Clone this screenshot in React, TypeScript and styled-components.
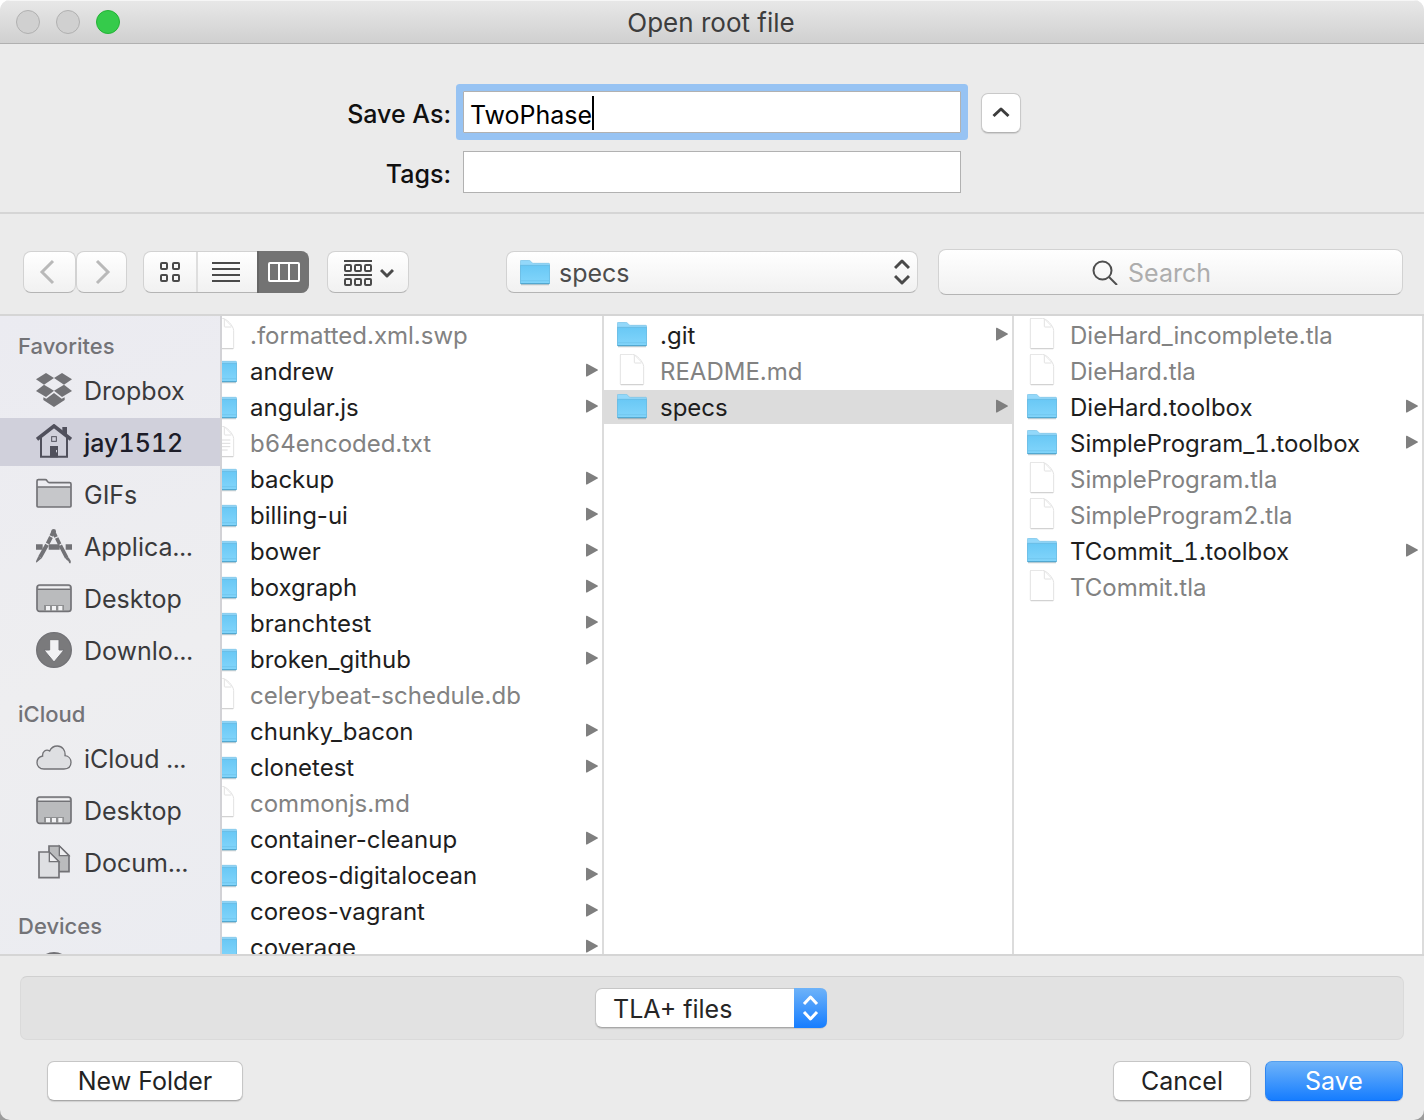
import React from "react";
import styled, { createGlobalStyle, css } from "styled-components";

const GlobalStyle = createGlobalStyle`
  *, *::before, *::after { box-sizing: border-box; }
  html { background: linear-gradient(#ffffff 50%, #9c9c9c 50%); height: 100%; }
  body { margin: 0; }
  body, button, input, select {
    font-family: Inter, Roboto, "Liberation Sans", sans-serif;
    font-size: 25px;
    line-height: 32px;
    color: #262626;
  }
  button, input, select { margin: 0; padding: 0; border: 0; background: none; }
  ul { list-style: none; margin: 0; padding: 0; }
  svg { display: block; flex: none; }
`;

const Window = styled.main`
  display: flex;
  flex-direction: column;
  height: 100vh;
  overflow: hidden;
  background: #ebebeb;
  border-radius: 10px;
`;

/* ---------- title bar ---------- */

const TitleBar = styled.header`
  display: grid;
  grid-template-columns: 1fr auto 1fr;
  align-items: center;
  height: 44px;
  flex: none;
  padding: 1px 18px 0 16px;
  background: linear-gradient(#e8e8e8, #d0d0d0);
  border-bottom: 1px solid #b0b0b0;
  box-shadow: inset 0 1px 0 #f6f6f6;
`;

const Lights = styled.div`
  display: flex;
  gap: 16px;
`;

const Light = styled.button<{ $on?: boolean }>`
  width: 24px;
  height: 24px;
  border-radius: 50%;
  background: ${(p) => (p.$on ? "#35cb4b" : "#d0d0d0")};
  border: 1px solid ${(p) => (p.$on ? "#24b236" : "#b0b0b0")};
`;

const Title = styled.h1`
  margin: 0;
  padding-top: 2px;
  font-size: 26px;
  font-weight: 400;
  line-height: 32px;
  color: #3d3d3d;
`;

/* ---------- name and tags ---------- */

const NameForm = styled.section`
  display: grid;
  grid-template-columns: 1fr minmax(0, 498px) 1fr;
  gap: 18px 12px;
  align-items: center;
  flex: none;
  padding: 47px 0 19px;
  border-bottom: 2px solid #d5d5d5;
`;

const FieldLabel = styled.label`
  grid-column: 1;
  justify-self: end;
  padding-top: 4px;
  font-weight: 500;
  color: #101010;
`;

const fieldBox = css`
  height: 42px;
  border: 1px solid #b1b1b1;
  background: #ffffff;
`;

const NameField = styled.div`
  ${fieldBox}
  display: flex;
  align-items: center;
  padding: 2px 0 0 6px;
  box-shadow: 0 0 0 7px #97c3f3;
  border-radius: 1px;
`;

const NameInput = styled.input`
  field-sizing: content;
  padding-top: 4px;
  color: #000000;
  caret-color: transparent;
  outline: none;
`;

const Caret = styled.span`
  width: 2px;
  height: 34px;
  background: #000000;
`;

const TagsInput = styled.input`
  ${fieldBox}
  width: 100%;
  padding: 0 7px;
  outline: none;
`;

const CollapseButton = styled.button`
  display: grid;
  place-items: center;
  width: 40px;
  height: 40px;
  margin: 2px 0 0 8px;
  background: #ffffff;
  border: 1px solid #c9c9c9;
  border-bottom-color: #b3b3b3;
  border-radius: 7px;
  box-shadow: 0 1px 1px rgba(0, 0, 0, 0.12);
`;

/* ---------- toolbar ---------- */

const Toolbar = styled.nav`
  display: flex;
  align-items: center;
  flex: none;
  padding: 35px 21px 19px 23px;
  border-bottom: 2px solid #d5d5d5;
`;

const raised = css`
  background: linear-gradient(#ffffff, #f1f1f1);
  border: 1px solid #d2d2d2;
  border-bottom-color: #b4b4b4;
`;

const ToolButton = styled.button<{ $width: number; $padding: string }>`
  ${raised}
  display: flex;
  align-items: center;
  justify-content: center;
  gap: 8px;
  width: ${(p) => p.$width}px;
  height: 42px;
  padding: ${(p) => p.$padding};
  border-radius: 8px;
`;

const ToolGroup = styled.div`
  display: flex;
  margin-right: 16px;
`;

const Segments = styled.div`
  ${raised}
  display: flex;
  height: 42px;
  margin-right: 18px;
  border-radius: 8px;
`;

const Segment = styled.button<{ $width: number; $active?: boolean }>`
  display: grid;
  place-items: center;
  width: ${(p) => p.$width}px;
  &:nth-child(2) {
    padding-right: 4px;
    border-left: 2px solid #dedede;
  }
  ${(p) =>
    p.$active &&
    css`
      margin: -1px -1px -1px 0;
      background: #737373;
      border-left: 2px solid #666666;
      border-radius: 0 8px 8px 0;
    `}
`;

const Picker = styled.div<{ $width: number }>`
  display: grid;
  align-items: center;
  width: ${(p) => p.$width}px;
  > * {
    grid-area: 1 / 1;
  }
  > svg {
    pointer-events: none;
  }
`;

const FolderPicker = styled(Picker)`
  margin: 0 20px 0 97px;
  > svg:nth-of-type(1) {
    margin: 2px 0 0 14px;
  }
  > svg:nth-of-type(2) {
    justify-self: end;
    margin-right: 8px;
  }
`;

const FolderSelect = styled.select`
  ${raised}
  appearance: none;
  width: 100%;
  height: 42px;
  padding: 2px 40px 0 52px;
  border-radius: 8px;
  color: #4c4c4c;
`;

const SearchBox = styled.label`
  ${raised}
  display: flex;
  align-items: center;
  justify-content: center;
  gap: 10px;
  flex: 1;
  height: 46px;
  padding-right: 38px;
  border-radius: 8px;
`;

const SearchInput = styled.input`
  field-sizing: content;
  padding-top: 2px;
  outline: none;
  &::placeholder {
    color: #adadad;
    opacity: 1;
  }
`;

/* ---------- browser ---------- */

const Browser = styled.section`
  display: flex;
  flex: 1;
  min-height: 0;
  overflow: hidden;
  border-bottom: 2px solid #d5d5d5;
`;

const Sidebar = styled.aside`
  display: flex;
  flex-direction: column;
  gap: 20px;
  flex: 0 0 222px;
  padding-top: 10px;
  overflow: hidden;
  background: linear-gradient(160deg, #ebebf1, #eeeef0 55%, #ebecf1);
  border-right: 2px solid #d2d2d6;
`;

const PlaceHeading = styled.h2`
  margin: 0;
  padding-left: 18px;
  font-size: 22px;
  font-weight: 500;
  line-height: 40px;
  color: #737377;
`;

const Places = styled.ul`
  display: flex;
  flex-direction: column;
  gap: 4px;
`;

const Place = styled.button<{ $selected?: boolean }>`
  display: flex;
  align-items: center;
  gap: 12px;
  width: 100%;
  height: 48px;
  padding-left: 36px;
  white-space: nowrap;
  font-variant-numeric: tabular-nums;
  background: ${(p) => (p.$selected ? "#d0d0db" : "transparent")};
  color: ${(p) => (p.$selected ? "#1c1c28" : "#3a3a3c")};
  font-weight: ${(p) => (p.$selected ? 500 : 400)};
`;

const PlaceName = styled.span`
  padding-top: 2px;
`;

const Columns = styled.div`
  display: flex;
  flex: 1;
  justify-content: flex-end;
  min-width: 0;
  overflow: hidden;
  background: #ffffff;
`;

const Column = styled.ul`
  display: flex;
  flex-direction: column;
  gap: 2px;
  flex: 0 0 410px;
  padding-top: 2px;
  border-right: 2px solid #dcdcdc;
`;

const Entry = styled.button<{ $selected?: boolean; $dim?: boolean; $numbered?: boolean }>`
  display: flex;
  align-items: center;
  gap: 13px;
  width: 100%;
  height: 34px;
  padding: 0 4px 0 13px;
  font-size: 24px;
  line-height: 32px;
  font-variant-numeric: ${(p) => (p.$numbered ? "tabular-nums" : "normal")};
  background: ${(p) => (p.$selected ? "#dcdcdc" : "transparent")};
  color: ${(p) => (p.$dim ? "#828282" : "#1e1e1e")};
`;

const EntryName = styled.span`
  flex: 1;
  padding-top: 2px;
  text-align: left;
  white-space: nowrap;
`;

/* ---------- footer ---------- */

const Footer = styled.footer`
  flex: none;
  padding: 20px 20px 19px;
`;

const FilterPanel = styled.div`
  display: flex;
  align-items: center;
  justify-content: center;
  height: 64px;
  padding-right: 2px;
  background: #e2e2e2;
  border: 1px solid #dadada;
  border-top-color: #d0d0d0;
  border-radius: 7px;
`;

const FilterPicker = styled(Picker)`
  > svg {
    justify-self: end;
  }
`;

const FilterSelect = styled.select`
  appearance: none;
  width: 100%;
  height: 40px;
  padding: 2px 40px 0 17px;
  background: #ffffff;
  border: 1px solid #c6c6c6;
  border-bottom-color: #a8a8a8;
  border-radius: 7px;
  box-shadow: 0 1px 1px rgba(0, 0, 0, 0.12);
`;

const Actions = styled.div`
  display: flex;
  gap: 14px;
  padding: 21px 1px 0 27px;
`;

const PushButton = styled.button<{ $width: number; $primary?: boolean; $first?: boolean }>`
  width: ${(p) => p.$width}px;
  height: 40px;
  margin-right: ${(p) => (p.$first ? "auto" : "0")};
  border-radius: 7px;
  border: 1px solid ${(p) => (p.$primary ? "#2f86f0" : "#c6c6c6")};
  border-top-color: ${(p) => (p.$primary ? "#559fee" : "#c6c6c6")};
  border-bottom-color: ${(p) => (p.$primary ? "#1268f5" : "#a8a8a8")};
  background: ${(p) => (p.$primary ? "linear-gradient(#6eb3f9, #167dff)" : "#ffffff")};
  color: ${(p) => (p.$primary ? "#ffffff" : "#222222")};
  box-shadow: 0 1px 1px rgba(0, 0, 0, 0.12);
`;

/* ---------- drawings ---------- */

const FolderIcon = () => (
  <svg width="30" height="26" viewBox="0 0 90 78" aria-hidden="true">
    <defs>
      <linearGradient id="folder-face" x1="0" y1="0" x2="0" y2="1">
        <stop offset="0" stopColor="#69c8f5" />
        <stop offset="1" stopColor="#82d5fb" />
      </linearGradient>
    </defs>
    <path d="M3 74H87" stroke="#000" strokeOpacity=".16" strokeWidth="4" />
    <path d="M1 70V4Q1 1 4 1H26Q29 1 31 3L36 8Q38 10 41 10H86Q89 10 89 13V70Z" fill="#93d8fa" stroke="#74bfe4" strokeWidth="2" />
    <path d="M1 16H89V69Q89 71 87 71H3Q1 71 1 69Z" fill="url(#folder-face)" stroke="#63b5dd" strokeWidth="2" />
    <path d="M2 62H88" stroke="#6cc2ea" strokeWidth="2" />
    <path d="M2 71H88" stroke="#4ea3cb" strokeWidth="3" />
  </svg>
);

const DocIcon = ({ lined }: { lined?: boolean }) => (
  <svg width="30" height="34" viewBox="0 2 90 102" aria-hidden="true">
    <path d="M11 3H46C58 3 80 26 80 40V91Q80 94 77 94H13Q10 94 10 91V5Q10 3 12 3Z" fill="#fff" stroke="#e2e2e2" strokeWidth="3" />
    <path d="M11 94H79" stroke="#cfcfcf" strokeWidth="3" />
    <path d="M52 5V27Q52 29 54 29H73" fill="none" stroke="#e2e2e2" strokeWidth="3" />
    <path d="M54 7L74 28" stroke="#e6e6e6" strokeWidth="2" />
    {lined && <path d="M20 24H44M20 34H44M20 44H70M20 54H70M20 64H70M20 74H62" stroke="#dcdcdc" strokeWidth="3" />}
  </svg>
);

const Arrow = () => (
  <svg width="12" height="16" viewBox="0 0 12 16" aria-hidden="true">
    <path d="M0 1.300Q0 .3 1 .8L11.600 6.600Q12.200 7 11.600 7.400L1 13.400Q0 13.900 0 12.900Z" fill="#7f7f7f" />
  </svg>
);

const glyph = "#727276";

const PlaceSvg = ({ children }: { children: React.ReactNode }) => (
  <svg width="36" height="36" viewBox="0 0 108 108" fill="none" stroke={glyph} strokeWidth="5" aria-hidden="true">
    {children}
  </svg>
);

const DropboxIcon = () => (
  <PlaceSvg>
    <g fill={glyph} stroke="none">
      <path d="M30 3L54 18L24 38L0 22Z" />
      <path d="M78 3L54 18L84 38L108 22Z" />
      <path d="M24 38L54 56L30 75L0 57Z" />
      <path d="M84 38L54 56L78 75L108 57Z" />
      <path d="M54 63L31 80L22 76V84L54 105L86 84V76L77 80Z" />
    </g>
  </PlaceSvg>
);

const HomeIcon = () => (
  <svg width="36" height="36" viewBox="0 0 108 108" fill="none" stroke="#50505c" aria-hidden="true">
    <path d="M79 9H93V34L79 24Z" fill="#50505c" stroke="none" />
    <path d="M3 46L54 6L105 46" strokeWidth="11" />
    <path d="M15 40V98H93V40" strokeWidth="6" />
    <rect x="47" y="38" width="14" height="14" strokeWidth="3" />
    <rect x="42" y="66" width="24" height="34" fill="#50505c" stroke="none" />
    <rect x="60" y="78" width="3" height="7" fill="#d0d0db" stroke="none" />
  </svg>
);

const FolderOutlineIcon = () => (
  <PlaceSvg>
    <path d="M3 33H105V93H3Z" fill="#c6c7ca" stroke="none" />
    <path d="M3 90V15Q3 11 7 11H28Q31 11 33 14L36 18Q38 20 41 20H101Q105 20 105 24V90Q105 93 102 93H6Q3 93 3 90Z" />
    <path d="M4 33H104" strokeWidth="4" />
  </PlaceSvg>
);

const ApplicationsIcon = () => (
  <PlaceSvg>
    <path d="M0 57H20M38 57H71M89 57H108" strokeWidth="17" />
    <path d="M53 9L46 24M45 27L35 47M33 50L12 88" strokeWidth="12" />
    <circle cx="53" cy="10" r="7" fill={glyph} stroke="none" />
    <path d="M7 85L17 91L1 104L0 100Z" fill={glyph} stroke="none" />
    <path d="M54 14L60 27M62 30L71 49M73 52L92 89" strokeWidth="11" />
    <path d="M88 90Q95 84 99 90Q106 98 104 106H100Q98 97 92 96Z" fill={glyph} stroke="none" />
  </PlaceSvg>
);

const DesktopIcon = () => (
  <PlaceSvg>
    <rect x="3" y="15" width="102" height="79" rx="8" fill="#babbbd" />
    <path d="M8 19H100V25H8Z" fill="#f2f2f4" stroke="none" />
    <path d="M4 28H104" strokeWidth="4" />
    <path d="M24 75H84V92H24Z" fill="#8f9092" stroke="none" />
    <path d="M30 78H42V91H30ZM48 78H60V91H48ZM67 78H79V91H67Z" fill="#f2f2f4" stroke="none" />
  </PlaceSvg>
);

const DownloadsIcon = () => (
  <PlaceSvg>
    <circle cx="54" cy="54" r="52" fill="#7a7a7c" strokeWidth="4" />
    <path d="M41 23H69V54H84L54 90L24 54H41Z" fill="#f2f2f4" strokeWidth="3" />
  </PlaceSvg>
);

const CloudIcon = () => (
  <PlaceSvg>
    <path
      d="M24 87C10 87 3 77 3 68C3 58 10 50 20 48C18 35 30 26 41 33C46 22 55 18 64 18C79 18 89 31 87 47C98 48 105 57 105 67C105 79 97 87 84 87Z"
      fill="#dedfe2"
      strokeWidth="4"
    />
  </PlaceSvg>
);

const DocumentsIcon = () => (
  <PlaceSvg>
    <path d="M39 6H70L99 35V83H39Z" fill="#babbbd" />
    <path d="M70 6V35H99Z" fill="#eeeef0" strokeWidth="4" />
    <path d="M9 24H39L69 54V101H9Z" fill="#dedfe2" />
    <path d="M40 24V53H69Z" fill="#eeeef0" strokeWidth="4" />
  </PlaceSvg>
);

const DiscIcon = () => (
  <PlaceSvg>
    <circle cx="54" cy="51" r="47" fill="#babbbd" strokeWidth="8" />
    <circle cx="54" cy="51" r="14" fill="#f2f2f4" />
  </PlaceSvg>
);

/* ---------- data ---------- */

type Kind = "folder" | "doc" | "lined";
type Item = [name: string, kind: Kind];

const sections = [
  {
    heading: "Favorites",
    places: [
      { name: "Dropbox", Icon: DropboxIcon },
      { name: "jay1512", Icon: HomeIcon },
      { name: "GIFs", Icon: FolderOutlineIcon },
      { name: "Applica...", Icon: ApplicationsIcon },
      { name: "Desktop", Icon: DesktopIcon },
      { name: "Downlo...", Icon: DownloadsIcon },
    ],
  },
  {
    heading: "iCloud",
    places: [
      { name: "iCloud ...", Icon: CloudIcon },
      { name: "Desktop", Icon: DesktopIcon },
      { name: "Docum...", Icon: DocumentsIcon },
    ],
  },
  { heading: "Devices", places: [{ name: "", Icon: DiscIcon }] },
];

const columns: { selected?: string; items: Item[] }[] = [
  {
    items: [
      [".formatted.xml.swp", "doc"],
      ["andrew", "folder"],
      ["angular.js", "folder"],
      ["b64encoded.txt", "lined"],
      ["backup", "folder"],
      ["billing-ui", "folder"],
      ["bower", "folder"],
      ["boxgraph", "folder"],
      ["branchtest", "folder"],
      ["broken_github", "folder"],
      ["celerybeat-schedule.db", "doc"],
      ["chunky_bacon", "folder"],
      ["clonetest", "folder"],
      ["commonjs.md", "doc"],
      ["container-cleanup", "folder"],
      ["coreos-digitalocean", "folder"],
      ["coreos-vagrant", "folder"],
      ["coverage", "folder"],
    ],
  },
  {
    selected: "specs",
    items: [
      [".git", "folder"],
      ["README.md", "doc"],
      ["specs", "folder"],
    ],
  },
  {
    items: [
      ["DieHard_incomplete.tla", "doc"],
      ["DieHard.tla", "doc"],
      ["DieHard.toolbox", "folder"],
      ["SimpleProgram_1.toolbox", "folder"],
      ["SimpleProgram.tla", "doc"],
      ["SimpleProgram2.tla", "doc"],
      ["TCommit_1.toolbox", "folder"],
      ["TCommit.tla", "doc"],
    ],
  },
];

export default function App() {
  return (
    <>
      <GlobalStyle />
      <Window>
        <TitleBar>
          <Lights>
            <Light aria-label="Close" />
            <Light aria-label="Minimize" />
            <Light $on aria-label="Zoom" />
          </Lights>
          <Title>Open root file</Title>
        </TitleBar>

        <NameForm>
          <FieldLabel htmlFor="name">Save As:</FieldLabel>
          <NameField>
            <NameInput id="name" defaultValue="TwoPhase" />
            <Caret />
          </NameField>
          <CollapseButton aria-label="Collapse">
            <svg width="18" height="12" viewBox="0 0 18 12" fill="none" stroke="#3c3c3c" strokeWidth="3">
              <path d="M1.500 9L9 2L16.500 9" strokeLinejoin="round" />
            </svg>
          </CollapseButton>
          <FieldLabel htmlFor="tags">Tags:</FieldLabel>
          <TagsInput id="tags" />
        </NameForm>

        <Toolbar>
          <ToolGroup>
            <ToolButton $width={53} $padding="0 5px 0 0" aria-label="Back">
              <svg width="16" height="26" viewBox="0 0 16 26" fill="none" stroke="#b9b9b9" strokeWidth="3">
                <path d="M14 2L3 13L14 24" />
              </svg>
            </ToolButton>
            <ToolButton $width={51} $padding="0 0 0 3px" aria-label="Forward">
              <svg width="16" height="26" viewBox="0 0 16 26" fill="none" stroke="#b9b9b9" strokeWidth="3">
                <path d="M2 2L13 13L2 24" />
              </svg>
            </ToolButton>
          </ToolGroup>
          <Segments>
            <Segment $width={52} aria-label="Icons">
              <svg width="20" height="20" viewBox="0 0 20 20" fill="none" stroke="#4a4a4a" strokeWidth="2">
                <rect x="1" y="1" width="6" height="6" rx="1" />
                <rect x="13" y="1" width="6" height="6" rx="1" />
                <rect x="1" y="13" width="6" height="6" rx="1" />
                <rect x="13" y="13" width="6" height="6" rx="1" />
              </svg>
            </Segment>
            <Segment $width={61} aria-label="List">
              <svg width="28" height="20" viewBox="0 0 28 20" stroke="#4a4a4a" strokeWidth="2">
                <path d="M0 1H28M0 7H28M0 13H28M0 19H28" />
              </svg>
            </Segment>
            <Segment $width={52} $active aria-label="Columns">
              <svg width="32" height="20" viewBox="0 0 32 20" fill="none" stroke="#ffffff" strokeWidth="2">
                <rect x="1" y="1" width="30" height="18" rx="1" />
                <path d="M11 1V19M21 1V19" />
              </svg>
            </Segment>
          </Segments>
          <ToolButton $width={82} $padding="2px 0 0 2px" aria-label="Arrange">
            <svg width="28" height="26" viewBox="0 0 28 26" fill="none" stroke="#4a4a4a" strokeWidth="2">
              <path d="M0 1H28M0 15H28" />
              <rect x="1" y="5" width="6" height="6" rx="1" />
              <rect x="11" y="5" width="6" height="6" rx="1" />
              <rect x="21" y="5" width="6" height="6" rx="1" />
              <rect x="1" y="19" width="6" height="6" rx="1" />
              <rect x="11" y="19" width="6" height="6" rx="1" />
              <rect x="21" y="19" width="6" height="6" rx="1" />
            </svg>
            <svg width="14" height="10" viewBox="0 0 14 10" fill="none" stroke="#4a4a4a" strokeWidth="3">
              <path d="M1 2L7 8L13 2" strokeLinejoin="round" />
            </svg>
          </ToolButton>
          <FolderPicker $width={412}>
            <FolderSelect aria-label="Folder">
              <option>specs</option>
            </FolderSelect>
            <FolderIcon />
            <svg width="16" height="26" viewBox="0 0 16 26" fill="none" stroke="#4a4a4a" strokeWidth="3">
              <path d="M1 9L8 2L15 9M1 17L8 24L15 17" strokeLinejoin="round" />
            </svg>
          </FolderPicker>
          <SearchBox>
            <svg width="26" height="26" viewBox="0 0 26 26" fill="none" stroke="#4f4f4f" strokeWidth="2">
              <circle cx="10.500" cy="11.500" r="9" />
              <path d="M17 18L25 26" />
            </svg>
            <SearchInput placeholder="Search" aria-label="Search" />
          </SearchBox>
        </Toolbar>

        <Browser>
          <Sidebar>
            {sections.map(({ heading, places }) => (
              <div key={heading}>
                <PlaceHeading>{heading}</PlaceHeading>
                <Places>
                  {places.map(({ name, Icon }) => (
                    <li key={name}>
                      <Place $selected={name === "jay1512"}>
                        <Icon />
                        <PlaceName>{name}</PlaceName>
                      </Place>
                    </li>
                  ))}
                </Places>
              </div>
            ))}
          </Sidebar>
          <Columns>
            {columns.map(({ selected, items }, i) => (
              <Column key={i}>
                {items.map(([name, kind]) => (
                  <li key={name}>
                    <Entry $selected={name === selected} $dim={kind !== "folder"} $numbered={/\d/.test(name)}>
                      {kind === "folder" ? <FolderIcon /> : <DocIcon lined={kind === "lined"} />}
                      <EntryName>{name}</EntryName>
                      {kind === "folder" && <Arrow />}
                    </Entry>
                  </li>
                ))}
              </Column>
            ))}
          </Columns>
        </Browser>

        <Footer>
          <FilterPanel>
            <FilterPicker $width={232}>
              <FilterSelect aria-label="File type">
                <option>TLA+ files</option>
              </FilterSelect>
              <svg width="33" height="40" viewBox="0 0 33 40" fill="none">
                <defs>
                  <linearGradient id="stepper" x1="0" y1="0" x2="0" y2="1">
                    <stop offset="0" stopColor="#6eb3f9" />
                    <stop offset="1" stopColor="#167dff" />
                  </linearGradient>
                </defs>
                <path d="M0 0H26Q33 0 33 7V33Q33 40 26 40H0Z" fill="url(#stepper)" />
                <path d="M10 16L16.500 9L23 16M10 24L16.500 31L23 24" stroke="#fff" strokeWidth="3" strokeLinejoin="round" />
              </svg>
            </FilterPicker>
          </FilterPanel>
          <Actions>
            <PushButton $width={196} $first>
              New Folder
            </PushButton>
            <PushButton $width={138}>Cancel</PushButton>
            <PushButton $width={138} $primary>
              Save
            </PushButton>
          </Actions>
        </Footer>
      </Window>
    </>
  );
}
